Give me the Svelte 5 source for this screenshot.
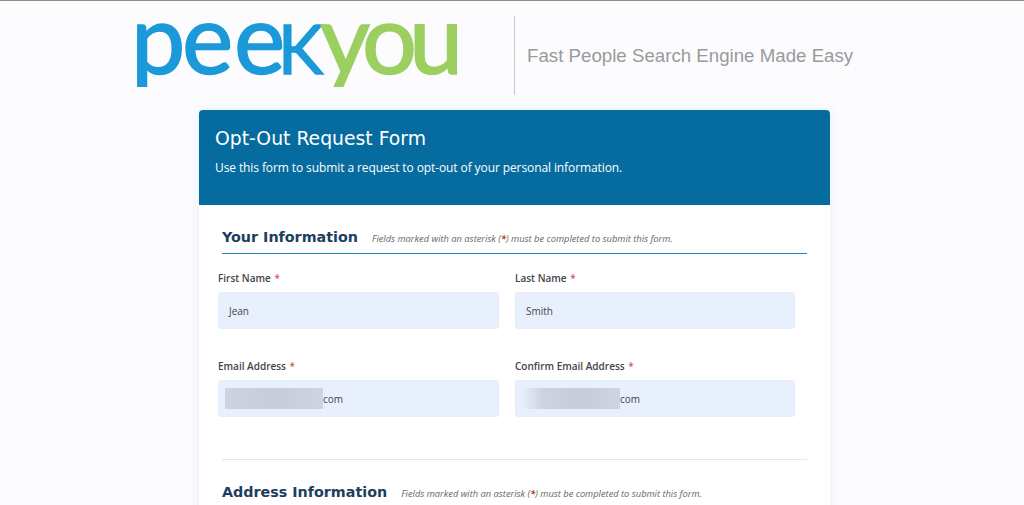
<script>
  const note = "must be completed to submit this form.";
  const rows = [
    [
      { label: "First Name", value: "Jean" },
      { label: "Last Name", value: "Smith" },
    ],
    [
      { label: "Email Address", value: "com", hidden: 98 },
      { label: "Confirm Email Address", value: "com", hidden: 98, fade: true },
    ],
  ];
</script>

<div class="page">
  <header class="brand">
    <svg class="logo" viewBox="0 0 330 109" width="330" height="109" role="img" aria-label="PeekYou">
      <text y="73" x="-6 45 97 141 183 225 272"><tspan class="peek">pee<tspan class="k">k</tspan></tspan><tspan class="you">you</tspan></text>
    </svg>
    <div class="divider"></div>
    <p class="tagline">Fast People Search Engine Made Easy</p>
  </header>

  <main class="card">
    <div class="card-head">
      <h1>Opt-Out Request Form</h1>
      <p>Use this form to submit a request to opt-out of your personal information.</p>
    </div>

    <section class="card-body">
      <div class="section-title">
        <h2>Your Information</h2>
        <em>Fields marked with an asterisk (<b>*</b>) {note}</em>
      </div>
      <div class="rule"></div>

      {#each rows as row}
        <div class="row">
          {#each row as field}
            <div class="field">
              <span class="label">{field.label} <b>*</b></span>
              <div class="input" class:masked={field.hidden}>
                {#if field.hidden}
                  <span class="blur" class:fade={field.fade} style="width: {field.hidden}px"></span>
                {/if}
                {field.value}
              </div>
            </div>
          {/each}
        </div>
      {/each}

      <hr />

      <div class="section-title">
        <h2>Address Information</h2>
        <em>Fields marked with an asterisk (<b>*</b>) {note}</em>
      </div>
    </section>
  </main>
</div>

<style>
  :global(body) {
    background: #fcfcff;
    overflow: hidden;
  }

  .page {
    height: 505px;
    overflow: hidden;
    box-sizing: border-box;
    border-top: 1px solid #8a8a8a;
    font-family: "Open Sans", sans-serif;
  }

  .brand {
    display: flex;
    align-items: center;
    height: 109px;
    padding: 0 0 0 137px;
    box-sizing: border-box;
  }

  .logo {
    flex-shrink: 0;
    margin-right: 47px;
    clip-path: inset(0 -10px 23px -10px);
    overflow: visible;
  }

  .logo text {
    font-family: Lato, sans-serif;
    font-size: 97px;
    stroke-width: 1.5px;
  }

  .peek {
    fill: #1b99d8;
    stroke: #1b99d8;
  }

  .you {
    fill: #9bcf60;
    stroke: #9bcf60;
  }

  .k {
    font-size: 68px;
    text-transform: uppercase;
  }

  .divider {
    width: 1px;
    height: 79px;
    background: #c8c8c8;
    flex-shrink: 0;
  }

  .tagline {
    margin: 0 0 0 12px;
    font-family: "Liberation Sans", Arial, sans-serif;
    font-size: 18.7px;
    color: #9a9a9a;
    white-space: nowrap;
  }

  .card {
    width: 631px;
    min-height: 420px;
    margin-left: 199px;
    background: #fff;
    border-radius: 4px 4px 0 0;
    box-shadow: 0 0 12px rgba(40, 60, 110, 0.08);
  }

  .card-head {
    height: 95px;
    box-sizing: border-box;
    padding: 17px 16px 0;
    background: #066b9e;
    border-radius: 4px 4px 0 0;
    color: #fff;
  }

  .card-head h1 {
    margin: 0;
    font-family: "DejaVu Sans", Verdana, sans-serif;
    font-size: 18.8px;
    font-weight: 400;
    line-height: 24px;
  }

  .card-head p {
    margin: 8px 0 0;
    font-size: 12px;
    letter-spacing: -0.1px;
    line-height: 18px;
  }

  .card-body {
    padding: 0 23px 0 19px;
  }

  .section-title {
    display: flex;
    align-items: baseline;
    gap: 14px;
    margin-left: 4px;
    height: 48px;
    box-sizing: border-box;
    padding-top: 22px;
  }

  .rule {
    height: 1px;
    margin: 0 0 16px 4px;
    background: #1f86c2;
  }

  .section-title h2 {
    margin: 0;
    font-family: "DejaVu Sans", Verdana, sans-serif;
    font-size: 14.3px;
    font-weight: 700;
    line-height: 20px;
    color: #1c3f60;
  }

  .section-title em {
    font-size: 9.3px;
    font-weight: 500;
    color: #666;
  }

  .section-title em b {
    color: #c0392b;
  }

  .row {
    display: grid;
    grid-template-columns: 281px 280px;
    gap: 16px;
    margin-bottom: 29px;
  }

  .label {
    display: block;
    height: 22px;
    font-size: 10px;
    font-weight: 600;
    line-height: 16px;
    color: #444;
  }

  .label b {
    margin-left: 1px;
    font-weight: 600;
    color: #d9534f;
  }

  .input {
    display: flex;
    align-items: center;
    height: 37px;
    box-sizing: border-box;
    padding-left: 10px;
    font-size: 10px;
    color: #444;
    background: #e8f0fd;
    border: 1px solid #e6eefb;
    border-radius: 3px;
  }

  .input.masked {
    padding-left: 6px;
  }

  .blur {
    display: block;
    height: 21px;
    background: linear-gradient(90deg, #ced3df, #c7ccd9 50%, #cfd4e0);
  }

  .blur.fade {
    background: linear-gradient(90deg, #e8f0fd, #ced3df 20%, #c7ccd9 60%, #cfd4e0);
  }

  hr {
    height: 1px;
    margin: 42px 0 0 4px;
    border: 0;
    background: #e6e6e6;
  }
</style>
